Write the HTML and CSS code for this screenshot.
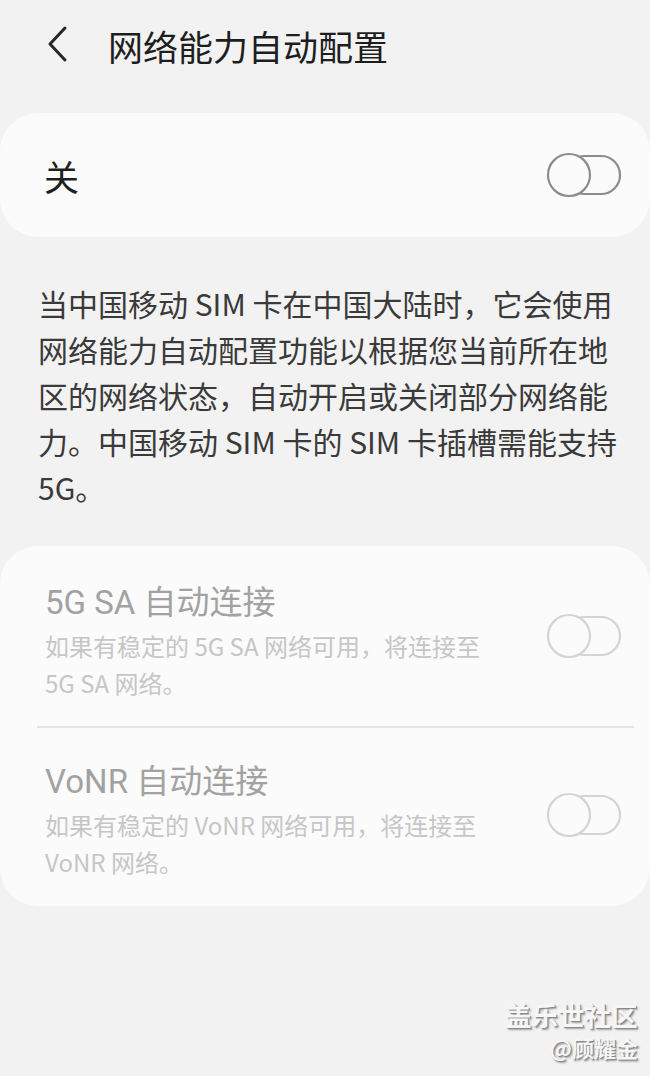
FILE: index.html
```html
<!DOCTYPE html>
<html lang="zh-CN">
<head>
<meta charset="utf-8">
<link rel="stylesheet" href="styles.css">
</head>
<body>
<div class="screen">
  <header class="appbar">
    <svg class="back" width="24" height="38" viewBox="0 0 24 38">
      <polyline points="19,3 4,19 19,35" fill="none" stroke="#262626" stroke-width="3" stroke-linecap="round" stroke-linejoin="round"/>
    </svg>
    <h1 class="title">网络能力自动配置</h1>
  </header>

  <section class="card master">
    <span class="master-label">关</span>
    <svg class="toggle" width="76" height="46" viewBox="0 0 76 46">
      <rect x="20" y="4" width="54" height="38" rx="19" fill="none" stroke="#8c8c8c" stroke-width="2.2"/>
      <circle cx="23" cy="23" r="21" fill="#fbfbfb" stroke="#8c8c8c" stroke-width="2.2"/>
    </svg>
  </section>

  <p class="desc">当中国移动 SIM 卡在中国大陆时，它会使用<br>网络能力自动配置功能以根据您当前所在地<br>区的网络状态，自动开启或关闭部分网络能<br>力。中国移动 SIM 卡的 SIM 卡插槽需能支持<br>5G。</p>

  <section class="card list">
    <div class="row first">
      <div class="row-text">
        <div class="row-title">5G SA 自动连接</div>
        <div class="row-sub">如果有稳定的 5G SA 网络可用，将连接至<br>5G SA 网络。</div>
      </div>
      <svg class="toggle" width="76" height="46" viewBox="0 0 76 46">
        <rect x="20" y="4" width="54" height="38" rx="19" fill="none" stroke="#d4d4d4" stroke-width="2.2"/>
        <circle cx="23" cy="23" r="21" fill="#fbfbfb" stroke="#d4d4d4" stroke-width="2.2"/>
      </svg>
    </div>
    <div class="divider"></div>
    <div class="row second">
      <div class="row-text">
        <div class="row-title">VoNR 自动连接</div>
        <div class="row-sub">如果有稳定的 VoNR 网络可用，将连接至<br>VoNR 网络。</div>
      </div>
      <svg class="toggle" width="76" height="46" viewBox="0 0 76 46">
        <rect x="20" y="4" width="54" height="38" rx="19" fill="none" stroke="#d4d4d4" stroke-width="2.2"/>
        <circle cx="23" cy="23" r="21" fill="#fbfbfb" stroke="#d4d4d4" stroke-width="2.2"/>
      </svg>
    </div>
  </section>

  <div class="watermark">
    <div class="wm-main">盖乐世社区</div>
    <div class="wm-sub">@顾耀金</div>
  </div>
</div>
</body>
</html>
```

FILE: styles.css
```css
* { box-sizing: border-box; }

html, body {
  margin: 0;
  padding: 0;
  background: #f2f2f2;
}

body {
  font-family: "Noto Sans CJK SC", "Noto Sans", "Liberation Sans", sans-serif;
  color: #222;
}

.screen {
  position: relative;
  width: 650px;
  height: 1076px;
  overflow: hidden;
}

.appbar {
  height: 90px;
  display: flex;
  align-items: center;
  padding-left: 46px;
}

.back {
  display: block;
  margin-top: -2px;
}

.title {
  margin: 0 0 0 38px;
  font-size: 35px;
  font-weight: 400;
  color: #1e1e1e;
  line-height: 1;
}

.card {
  background: #fbfbfb;
  border-radius: 38px;
}

.master {
  margin-top: 23px;
  height: 124px;
  display: flex;
  align-items: center;
  justify-content: space-between;
  padding: 0 28px 0 44px;
}

.master-label {
  font-size: 35px;
  color: #1e1e1e;
  line-height: 1;
}

.toggle {
  display: block;
  flex: none;
}

.desc {
  margin: 43px 0 0 0;
  padding: 0 20px 0 38px;
  font-size: 30px;
  line-height: 46px;
  color: #3a3a3a;
  white-space: nowrap;
}

.list {
  margin-top: 36px;
  height: 360px;
  display: flex;
  flex-direction: column;
}

.row {
  display: flex;
  align-items: center;
  justify-content: space-between;
  padding: 0 28px 0 45px;
}

.row.first {
  padding-top: 35px;
  padding-bottom: 25px;
}

.row.second {
  padding-top: 32px;
  padding-bottom: 25px;
}

.row-title {
  font-family: "Roboto", "Noto Sans CJK SC", sans-serif;
  font-size: 33px;
  line-height: 44px;
  color: #a2a2a2;
}

.row-sub {
  font-size: 24px;
  line-height: 37px;
  color: #c6c6c6;
  margin-top: 2px;
}

.row .toggle {
  margin-top: -10px;
}

.divider {
  height: 2px;
  background: #e4e4e4;
  margin: 0 16px 0 37px;
}

.watermark {
  position: absolute;
  right: 12px;
  bottom: 14px;
  text-align: right;
  color: #f6f6f6;
  text-shadow: 1px 1px 0 #8a8a8a, 2px 2px 2px #a0a0a0;
}

.wm-main {
  font-size: 26px;
  line-height: 34px;
  font-weight: 700;
  letter-spacing: 0.5px;
}

.wm-sub {
  font-size: 22px;
  line-height: 30px;
  font-weight: 700;
}
```
